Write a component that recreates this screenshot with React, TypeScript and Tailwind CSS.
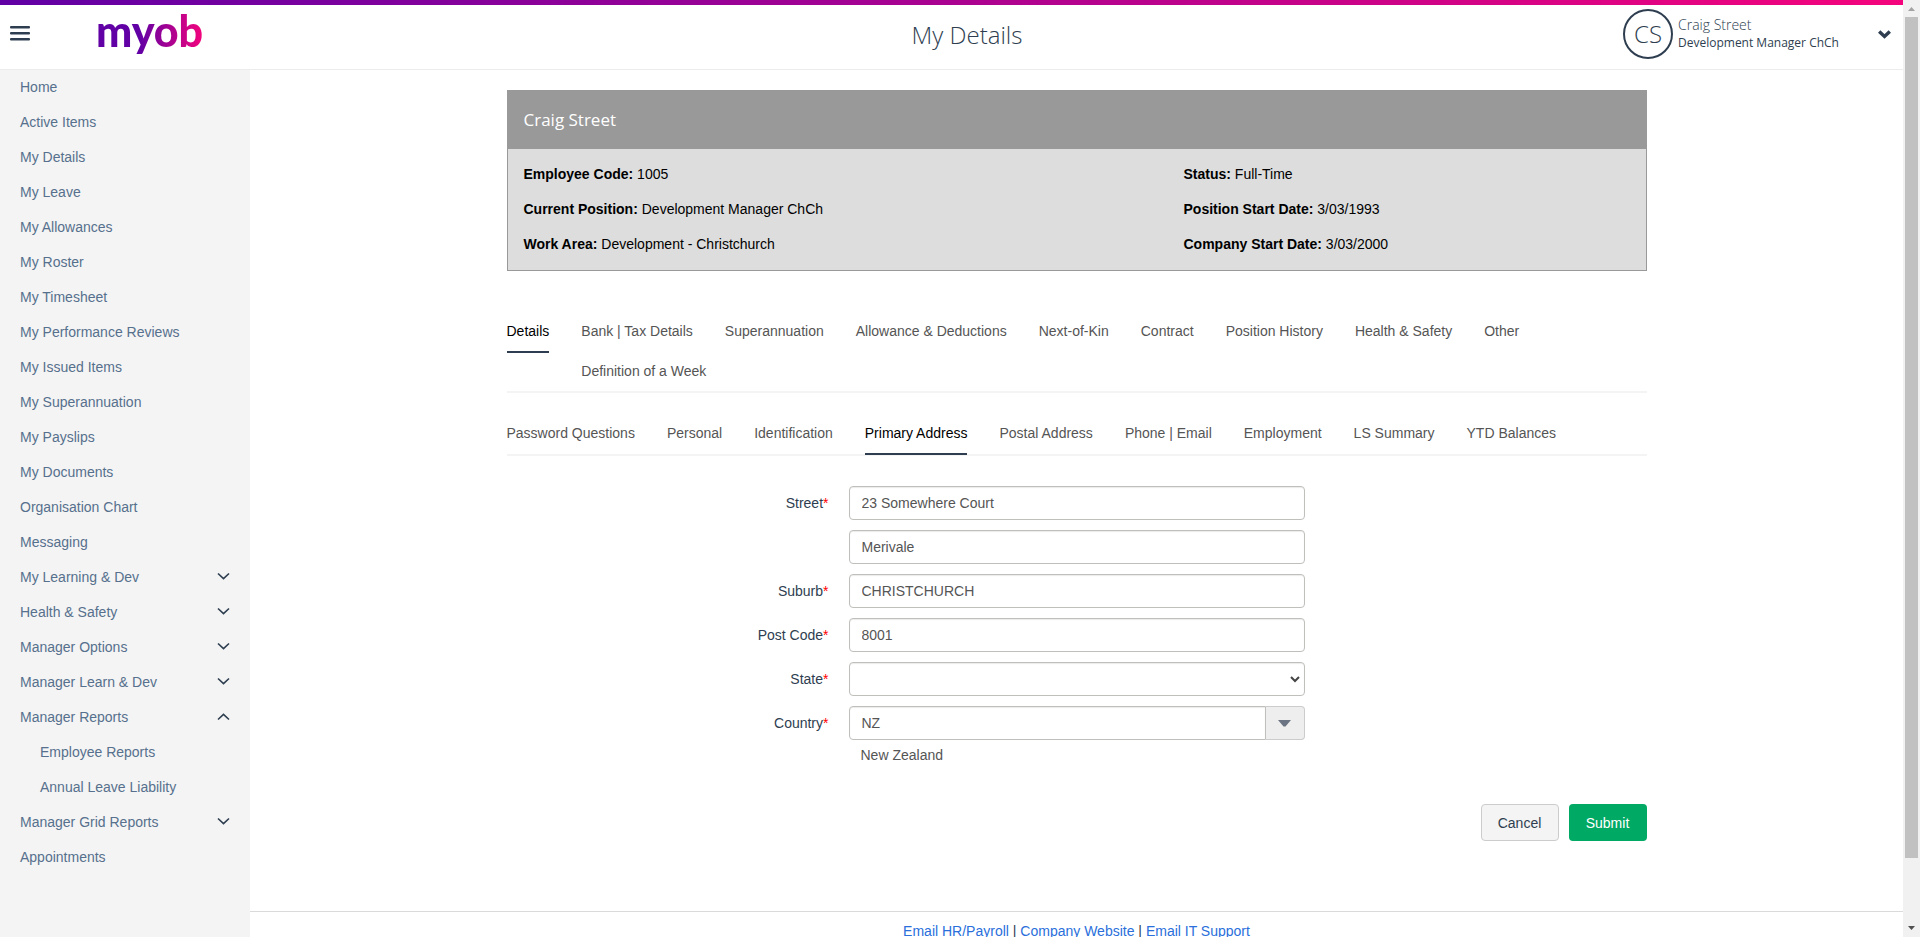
import { useState } from "react";

interface MenuItem {
  label: string;
  group?: "open" | "closed";
  child?: boolean;
}

const menu: MenuItem[] = [
  { label: "Home" },
  { label: "Active Items" },
  { label: "My Details" },
  { label: "My Leave" },
  { label: "My Allowances" },
  { label: "My Roster" },
  { label: "My Timesheet" },
  { label: "My Performance Reviews" },
  { label: "My Issued Items" },
  { label: "My Superannuation" },
  { label: "My Payslips" },
  { label: "My Documents" },
  { label: "Organisation Chart" },
  { label: "Messaging" },
  { label: "My Learning & Dev", group: "closed" },
  { label: "Health & Safety", group: "closed" },
  { label: "Manager Options", group: "closed" },
  { label: "Manager Learn & Dev", group: "closed" },
  { label: "Manager Reports", group: "open" },
  { label: "Employee Reports", child: true },
  { label: "Annual Leave Liability", child: true },
  { label: "Manager Grid Reports", group: "closed" },
  { label: "Appointments" },
];

const sections = [
  "Details",
  "Bank | Tax Details",
  "Superannuation",
  "Allowance & Deductions",
  "Next-of-Kin",
  "Contract",
  "Position History",
  "Health & Safety",
  "Other",
  "Definition of a Week",
];

const pages = [
  "Password Questions",
  "Personal",
  "Identification",
  "Primary Address",
  "Postal Address",
  "Phone | Email",
  "Employment",
  "LS Summary",
  "YTD Balances",
];

const summary = [
  ["Employee Code:", "1005"],
  ["Status:", "Full-Time"],
  ["Current Position:", "Development Manager ChCh"],
  ["Position Start Date:", "3/03/1993"],
  ["Work Area:", "Development - Christchurch"],
  ["Company Start Date:", "3/03/2000"],
];

const inputClass =
  "block h-[34px] w-full rounded border border-[#bfc0bb] bg-white px-3 text-sm text-[#555] shadow-[inset_0_1px_1px_rgba(0,0,0,0.08)] outline-none";

function Header() {
  return (
    <header className="shrink-0 bg-white border-b border-[#ececec]">
      <div className="h-[5px] bg-linear-to-r/srgb from-[#6100a5] to-[#f4047c]" />
      <div className="flex h-16 items-center text-[#2e3e50]">
        <div className="flex h-full w-[311px] items-center pl-[10px]">
          <button aria-label="Menu" className="mb-2 w-5">
            <svg viewBox="0 0 20 15" className="block w-full" fill="currentColor">
              <rect width="20" height="2.6" rx="1" />
              <rect y="6" width="20" height="2.6" rx="1" />
              <rect y="12" width="20" height="2.6" rx="1" />
            </svg>
          </button>
          <a
            href="#"
            className="ml-[66px] mb-3 bg-linear-to-r/srgb from-[#6100a5] from-40% to-[#f4047c] bg-clip-text font-['Lato',sans-serif] text-[43px] font-black leading-[56px] text-transparent"
          >
            myob
          </a>
        </div>
        <h1 className="flex-1 pb-1 text-center font-['Open_Sans',sans-serif] text-2xl font-light">
          My Details
        </h1>
        <div className="flex w-[280px] items-center pb-1.5 pr-3 font-['Open_Sans',sans-serif]">
          <div className="flex size-[50px] items-center justify-center rounded-full border-2 border-[#2e3e50] text-2xl font-light">
            CS
          </div>
          <div className="ml-[5px] flex-1">
            <p className="text-sm font-light leading-[18px]">Craig Street</p>
            <p className="text-xs leading-[18px]">Development Manager ChCh</p>
          </div>
          <button aria-label="Account menu" className="w-[13px]">
            <svg viewBox="0 0 13 9" className="block w-full" fill="none" stroke="currentColor" strokeWidth="3.4">
              <path d="M1.2 1.5 6.5 6.5 11.8 1.5" />
            </svg>
          </button>
        </div>
      </div>
    </header>
  );
}

function Sidebar() {
  return (
    <nav className="w-[250px] shrink-0 bg-[#f4f4f4] text-sm leading-4 text-[#56708d]">
      {menu.map((item) => (
        <a
          key={item.label}
          href="#"
          className={`flex h-[35px] items-center justify-between pb-0.5 pr-5 ${item.child ? "pl-10" : "pl-5"}`}
        >
          {item.label}
          {item.group && (
            <svg
              viewBox="0 0 13 9"
              className={`w-[13px] text-[#2e3e50] ${item.group === "open" ? "rotate-180" : ""}`}
              fill="none"
              stroke="currentColor"
              strokeWidth="1.6"
            >
              <path d="M1 1.5 6.5 6.7 12 1.5" />
            </svg>
          )}
        </a>
      ))}
    </nav>
  );
}

function Tabs({ items, initial }: { items: string[]; initial: string }) {
  const [active, setActive] = useState(initial);
  return (
    <div className="flow-root border-b-2 border-[#f4f4f4] text-sm" role="tablist">
      {items.map((item) => (
        <button
          key={item}
          role="tab"
          aria-selected={item === active}
          onClick={() => setActive(item)}
          className={`relative float-left mr-8 ${
            item === active
              ? "-mb-px h-[42px] border-b-2 border-[#2e3e50] text-black"
              : "h-10 text-[#555]"
          }`}
        >
          {item}
        </button>
      ))}
    </div>
  );
}

function Label({ id, text }: { id: string; text: string }) {
  return (
    <label htmlFor={id} className="pr-5 text-right leading-[34px] text-[#2e3e50]">
      {text}
      <span className="text-[#f00]">*</span>
    </label>
  );
}

function AddressForm() {
  return (
    <form className="text-sm" onSubmit={(e) => e.preventDefault()}>
      <div className="mt-[30px] grid grid-cols-[30%_40%] gap-y-[10px]">
        <Label id="street" text="Street" />
        <input id="street" className={inputClass} defaultValue="23 Somewhere Court" />
        <input
          aria-label="Street line 2"
          className={`${inputClass} col-start-2`}
          defaultValue="Merivale"
        />
        <Label id="suburb" text="Suburb" />
        <input id="suburb" className={inputClass} defaultValue="CHRISTCHURCH" />
        <Label id="postcode" text="Post Code" />
        <input id="postcode" className={inputClass} defaultValue="8001" />
        <Label id="state" text="State" />
        <div className="relative">
          <select id="state" className={`${inputClass} appearance-none`}>
            <option></option>
          </select>
          <svg
            viewBox="0 0 10 7"
            className="pointer-events-none absolute right-[5px] top-[14px] w-[10px] text-[#444]"
            fill="none"
            stroke="currentColor"
            strokeWidth="2"
          >
            <path d="M1 1 5 5 9 1" />
          </svg>
        </div>
        <Label id="country" text="Country" />
        <div>
          <div className="flex">
            <input
              id="country"
              className="h-[34px] min-w-0 flex-1 rounded-l border border-[#bfc0bb] bg-white px-3 text-sm text-[#555] shadow-[inset_0_1px_1px_rgba(0,0,0,0.08)] outline-none"
              defaultValue="NZ"
            />
            <button
              type="button"
              aria-label="Choose country"
              className="flex w-[39px] items-center justify-center rounded-r border border-l-0 border-[#ccc] bg-[#eee]"
            >
              <svg viewBox="0 0 13 7" className="w-[13px]" fill="#6b7482">
                <path d="M0 0H13L7.5 6.5H5.5Z" />
              </svg>
            </button>
          </div>
          <p className="mt-[5px] pl-3 text-[#555]">New Zealand</p>
        </div>
      </div>
      <div className="mt-[39px] flex justify-end gap-[10px]">
        <button type="button" className="h-[37px] w-[78px] rounded border border-[#ccc] bg-[#f4f4f4] text-[#2e3e50]">
          Cancel
        </button>
        <button type="submit" className="h-[37px] w-[78px] rounded bg-[#00a964] text-white">
          Submit
        </button>
      </div>
    </form>
  );
}

function Scrollbar() {
  return (
    <div className="flex w-[17px] shrink-0 flex-col items-center bg-[#f1f1f1]">
      <svg viewBox="0 0 17 17" className="w-full shrink-0" fill="#a3a3a3">
        <path d="M5 11 8.5 7 12 11Z" />
      </svg>
      <div className="w-[13px] grow-[841] basis-0 bg-[#c1c1c1]" />
      <div className="grow-[62] basis-0" />
      <svg viewBox="0 0 17 17" className="w-full shrink-0" fill="#505050">
        <path d="M5 6 8.5 10 12 6Z" />
      </svg>
    </div>
  );
}

export default function App() {
  return (
    <div className="flex h-screen overflow-hidden bg-white font-['Liberation_Sans',Arial,sans-serif]">
      <div className="flex min-w-0 flex-1 flex-col">
        <Header />
        <div className="flex min-h-0 flex-1">
          <Sidebar />
          <div className="flex min-w-0 flex-1 flex-col overflow-hidden">
            <main className="mx-auto w-full max-w-[1140px] pt-5">
              <section className="border border-[#999]">
                <h2 className="bg-[#999] px-4 font-['Open_Sans',sans-serif] text-[17px] leading-[58px] text-white">
                  Craig Street
                </h2>
                <div className="grid grid-cols-[660px_1fr] bg-[#ddd] px-4 pb-2 pt-2 text-sm text-black">
                  {summary.map(([name, value]) => (
                    <p key={name} className="leading-[35px]">
                      <b>{name}</b> {value}
                    </p>
                  ))}
                </div>
              </section>
              <div className="mt-10">
                <Tabs items={sections} initial="Details" />
              </div>
              <div className="mt-5">
                <Tabs items={pages} initial="Primary Address" />
              </div>
              <AddressForm />
            </main>
            <footer className="mt-[70px] border-t border-[#dadada] pt-[9px] text-center text-sm text-[#2e3e50]">
              <a href="#" className="text-[#2a6fdb]">Email HR/Payroll</a> |{" "}
              <a href="#" className="text-[#2a6fdb]">Company Website</a> |{" "}
              <a href="#" className="text-[#2a6fdb]">Email IT Support</a>
            </footer>
          </div>
        </div>
      </div>
      <Scrollbar />
    </div>
  );
}
